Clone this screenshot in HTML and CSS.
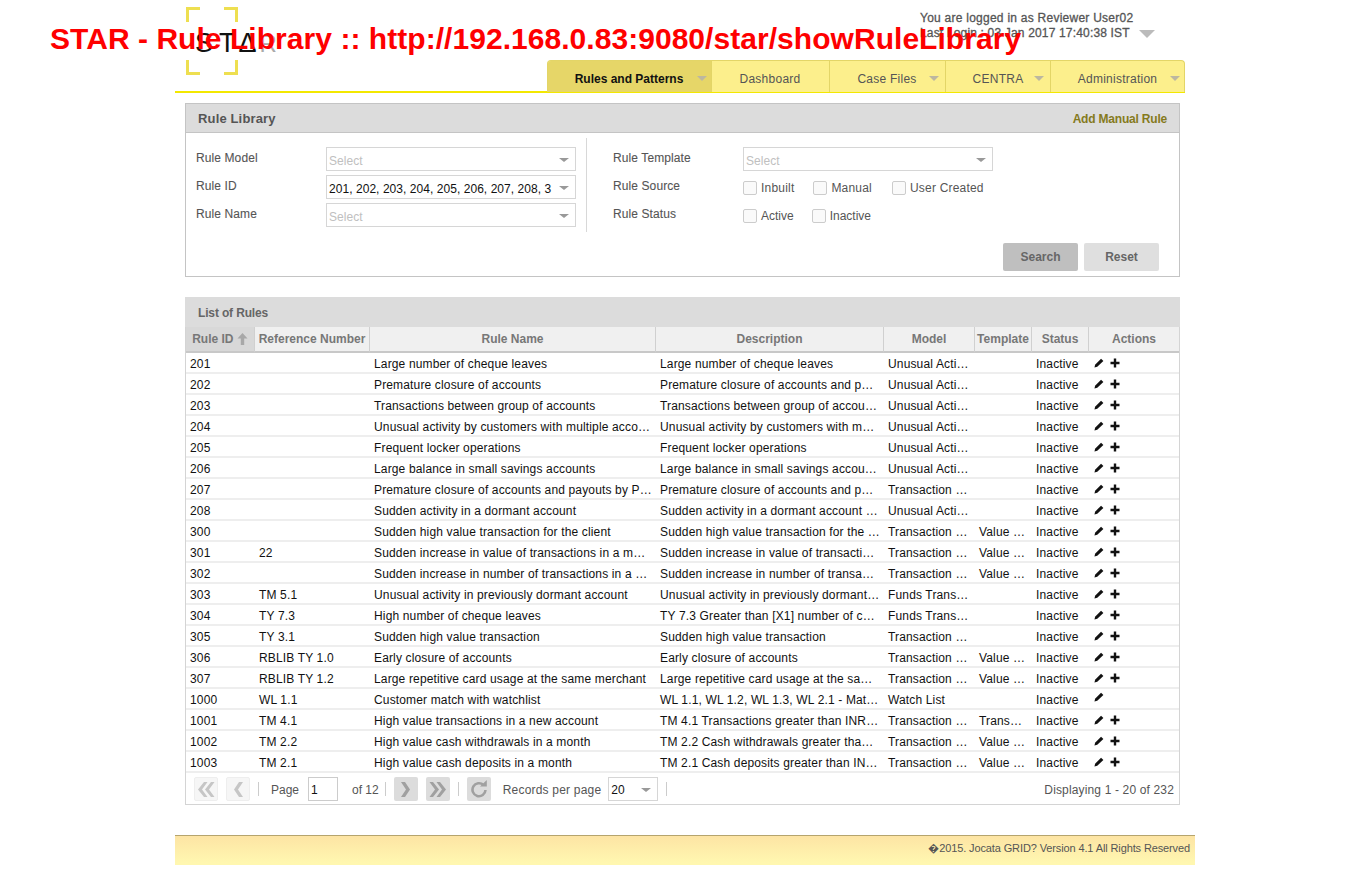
FILE: index.html
```html
<!DOCTYPE html>
<html lang="en">
<head>
<meta charset="utf-8">
<title>STAR - Rule Library</title>
<link rel="stylesheet" href="styles.css">
</head>
<body>
<div class="overlay-title">STAR - Rule Library :: http://192.168.0.83:9080/star/showRuleLibrary</div>
<div class="page">
  <header class="header">
    <div class="logo">
      <svg class="logo-frame" width="52" height="68" viewBox="0 0 52 68"><path d="M14 1.500H1.500V15M38 1.500H50.500V15M14 66.500H1.500V53M38 66.500H50.500V53" fill="none" stroke="#eedf50" stroke-width="3"/></svg>
      <span class="logo-text"><span class="logo-s">S</span>TΔ<span class="logo-r">R</span></span>
    </div>
    <div class="user-info">
      <div>You are logged in as Reviewer User02</div>
      <div class="user-last">Last Login : 03 Jan 2017 17:40:38 IST<span class="user-caret"></span></div>
    </div>
    <nav class="nav">
      <a class="nav-item nav-active nav-w1">Rules and Patterns<i class="caret"></i></a>
      <a class="nav-item nav-w2">Dashboard</a>
      <a class="nav-item nav-w3">Case Files<i class="caret caret-in"></i></a>
      <a class="nav-item nav-w4">CENTRA<i class="caret caret-in"></i></a>
      <a class="nav-item nav-w5">Administration<i class="caret"></i></a>
    </nav>
  </header>

  <section class="panel search-panel">
    <div class="panel-head">
      <h2>Rule Library</h2>
      <a class="add-link">Add Manual Rule</a>
    </div>
    <div class="search-body">
      <div class="form-col form-left">
        <label>Rule Model</label>
        <div class="select placeholder">Select<i class="sel-caret"></i></div>
        <label>Rule ID</label>
        <div class="select">201, 202, 203, 204, 205, 206, 207, 208, 3<i class="sel-caret"></i></div>
        <label>Rule Name</label>
        <div class="select placeholder">Select<i class="sel-caret"></i></div>
      </div>
      <div class="form-col form-right">
        <label>Rule Template</label>
        <div class="select placeholder">Select<i class="sel-caret"></i></div>
        <label>Rule Source</label>
        <div class="checks checks-wide">
          <span class="check c1"><i class="box"></i>Inbuilt</span>
          <span class="check c2"><i class="box"></i>Manual</span>
          <span class="check"><i class="box"></i>User Created</span>
        </div>
        <label>Rule Status</label>
        <div class="checks">
          <span class="check c3"><i class="box"></i>Active</span>
          <span class="check"><i class="box"></i>Inactive</span>
        </div>
      </div>
      <div class="buttons">
        <button class="btn btn-search">Search</button>
        <button class="btn btn-reset">Reset</button>
      </div>
    </div>
  </section>

  <section class="list-panel">
    <h3 class="list-title">List of Rules</h3>
    <table class="grid">
      <colgroup>
        <col class="w-id"><col class="w-ref"><col class="w-name"><col class="w-desc"><col class="w-model"><col class="w-tmpl"><col class="w-status"><col class="w-act">
      </colgroup>
      <thead>
        <tr>
          <th class="sorted">Rule ID <svg width="11" height="12" viewBox="0 0 11 12"><path d="M5.500 0L10.500 5.500H7.200V12H3.800V5.500H.5Z" fill="#a8a8a8"/></svg></th>
          <th>Reference Number</th><th>Rule Name</th><th>Description</th><th>Model</th><th>Template</th><th>Status</th><th>Actions</th>
        </tr>
      </thead>
      <tbody>
        <tr><td>201</td><td></td><td>Large number of cheque leaves</td><td>Large number of cheque leaves</td><td>Unusual Activity</td><td></td><td>Inactive</td><td class="act"><svg class="ic-edit"><use href="#edit"/></svg><svg class="ic-add"><use href="#add"/></svg></td></tr>
        <tr><td>202</td><td></td><td>Premature closure of accounts</td><td>Premature closure of accounts and payouts</td><td>Unusual Activity</td><td></td><td>Inactive</td><td class="act"><svg class="ic-edit"><use href="#edit"/></svg><svg class="ic-add"><use href="#add"/></svg></td></tr>
        <tr><td>203</td><td></td><td>Transactions between group of accounts</td><td>Transactions between group of accounts held</td><td>Unusual Activity</td><td></td><td>Inactive</td><td class="act"><svg class="ic-edit"><use href="#edit"/></svg><svg class="ic-add"><use href="#add"/></svg></td></tr>
        <tr><td>204</td><td></td><td>Unusual activity by customers with multiple accounts</td><td>Unusual activity by customers with multiple accounts</td><td>Unusual Activity</td><td></td><td>Inactive</td><td class="act"><svg class="ic-edit"><use href="#edit"/></svg><svg class="ic-add"><use href="#add"/></svg></td></tr>
        <tr><td>205</td><td></td><td>Frequent locker operations</td><td>Frequent locker operations</td><td>Unusual Activity</td><td></td><td>Inactive</td><td class="act"><svg class="ic-edit"><use href="#edit"/></svg><svg class="ic-add"><use href="#add"/></svg></td></tr>
        <tr><td>206</td><td></td><td>Large balance in small savings accounts</td><td>Large balance in small savings accounts held</td><td>Unusual Activity</td><td></td><td>Inactive</td><td class="act"><svg class="ic-edit"><use href="#edit"/></svg><svg class="ic-add"><use href="#add"/></svg></td></tr>
        <tr><td>207</td><td></td><td>Premature closure of accounts and payouts by Proxy</td><td>Premature closure of accounts and payouts</td><td>Transaction Monitoring</td><td></td><td>Inactive</td><td class="act"><svg class="ic-edit"><use href="#edit"/></svg><svg class="ic-add"><use href="#add"/></svg></td></tr>
        <tr><td>208</td><td></td><td>Sudden activity in a dormant account</td><td>Sudden activity in a dormant account - details</td><td>Unusual Activity</td><td></td><td>Inactive</td><td class="act"><svg class="ic-edit"><use href="#edit"/></svg><svg class="ic-add"><use href="#add"/></svg></td></tr>
        <tr><td>300</td><td></td><td>Sudden high value transaction for the client</td><td>Sudden high value transaction for the client</td><td>Transaction Monitoring</td><td>Value Based</td><td>Inactive</td><td class="act"><svg class="ic-edit"><use href="#edit"/></svg><svg class="ic-add"><use href="#add"/></svg></td></tr>
        <tr><td>301</td><td>22</td><td>Sudden increase in value of transactions in a month</td><td>Sudden increase in value of transactions in a month</td><td>Transaction Monitoring</td><td>Value Based</td><td>Inactive</td><td class="act"><svg class="ic-edit"><use href="#edit"/></svg><svg class="ic-add"><use href="#add"/></svg></td></tr>
        <tr><td>302</td><td></td><td>Sudden increase in number of transactions in a month</td><td>Sudden increase in number of transactions</td><td>Transaction Monitoring</td><td>Value Based</td><td>Inactive</td><td class="act"><svg class="ic-edit"><use href="#edit"/></svg><svg class="ic-add"><use href="#add"/></svg></td></tr>
        <tr><td>303</td><td>TM 5.1</td><td>Unusual activity in previously dormant account</td><td>Unusual activity in previously dormant account</td><td>Funds Transactions</td><td></td><td>Inactive</td><td class="act"><svg class="ic-edit"><use href="#edit"/></svg><svg class="ic-add"><use href="#add"/></svg></td></tr>
        <tr><td>304</td><td>TY 7.3</td><td>High number of cheque leaves</td><td>TY 7.3 Greater than [X1] number of cheque leaves</td><td>Funds Transactions</td><td></td><td>Inactive</td><td class="act"><svg class="ic-edit"><use href="#edit"/></svg><svg class="ic-add"><use href="#add"/></svg></td></tr>
        <tr><td>305</td><td>TY 3.1</td><td>Sudden high value transaction</td><td>Sudden high value transaction</td><td>Transaction Monitoring</td><td></td><td>Inactive</td><td class="act"><svg class="ic-edit"><use href="#edit"/></svg><svg class="ic-add"><use href="#add"/></svg></td></tr>
        <tr><td>306</td><td>RBLIB TY 1.0</td><td>Early closure of accounts</td><td>Early closure of accounts</td><td>Transaction Monitoring</td><td>Value Based</td><td>Inactive</td><td class="act"><svg class="ic-edit"><use href="#edit"/></svg><svg class="ic-add"><use href="#add"/></svg></td></tr>
        <tr><td>307</td><td>RBLIB TY 1.2</td><td>Large repetitive card usage at the same merchant</td><td>Large repetitive card usage at the same merchant</td><td>Transaction Monitoring</td><td>Value Based</td><td>Inactive</td><td class="act"><svg class="ic-edit"><use href="#edit"/></svg><svg class="ic-add"><use href="#add"/></svg></td></tr>
        <tr><td>1000</td><td>WL 1.1</td><td>Customer match with watchlist</td><td>WL 1.1, WL 1.2, WL 1.3, WL 2.1 - Match with list</td><td>Watch List</td><td></td><td>Inactive</td><td class="act"><svg class="ic-edit ic-up"><use href="#edit"/></svg></td></tr>
        <tr><td>1001</td><td>TM 4.1</td><td>High value transactions in a new account</td><td>TM 4.1 Transactions greater than INR 10 lakh</td><td>Transaction Monitoring</td><td>Transaction</td><td>Inactive</td><td class="act"><svg class="ic-edit"><use href="#edit"/></svg><svg class="ic-add"><use href="#add"/></svg></td></tr>
        <tr><td>1002</td><td>TM 2.2</td><td>High value cash withdrawals in a month</td><td>TM 2.2 Cash withdrawals greater than INR 10 lakh</td><td>Transaction Monitoring</td><td>Value Based</td><td>Inactive</td><td class="act"><svg class="ic-edit"><use href="#edit"/></svg><svg class="ic-add"><use href="#add"/></svg></td></tr>
        <tr><td>1003</td><td>TM 2.1</td><td>High value cash deposits in a month</td><td>TM 2.1 Cash deposits greater than INR 10 lakh</td><td>Transaction Monitoring</td><td>Value Based</td><td>Inactive</td><td class="act"><svg class="ic-edit"><use href="#edit"/></svg><svg class="ic-add"><use href="#add"/></svg></td></tr>
      </tbody>
    </table>
    <div class="pager">
      <span class="pbtn disabled"><svg width="18" height="15" viewBox="0 0 18 15"><path d="M7 0h3.500L5 7.500 10.500 15H7L1 7.500zM14 0h3.500L12 7.500l5.500 7.500H14L8 7.500z" fill="#c6c6c6"/></svg></span>
      <span class="pbtn disabled"><svg width="11" height="15" viewBox="0 0 11 15"><path d="M6 0h4L5 7.500l5 7.500H6L1 7.500z" fill="#c6c6c6"/></svg></span>
      <i class="psep"></i>
      <span class="ptext ptext-page">Page</span>
      <span class="pinput">1</span>
      <span class="ptext ptext-of">of 12</span>
      <i class="psep psep-tight"></i>
      <span class="pbtn active"><svg width="11" height="15" viewBox="0 0 11 15"><path d="M1 0h4l5 7.500L5 15H1l5-7.500z" fill="#a0a0a0"/></svg></span>
      <span class="pbtn active"><svg width="18" height="15" viewBox="0 0 18 15"><path d="M.5 0H4l6 7.500L4 15H.5L6 7.500zM7.500 0H11l6 7.500L11 15H7.500L13 7.500z" fill="#a0a0a0"/></svg></span>
      <i class="psep psep-tight"></i>
      <span class="pbtn active pbtn-refresh"><svg width="18" height="18" viewBox="0 0 18 18"><path d="M13.500 5A6.500 6.500 0 1 0 15.500 10" fill="none" stroke="#a0a0a0" stroke-width="2.600"/><path d="M10 6.500H16.800V0z" fill="#a0a0a0"/></svg></span>
      <span class="ptext ptext-rec">Records per page</span>
      <div class="select pselect">20<i class="sel-caret"></i></div>
      <i class="psep"></i>
      <span class="ptext pinfo">Displaying 1 - 20 of 232</span>
    </div>
  </section>

  <footer class="footer">�2015. Jocata GRID? Version 4.1 All Rights Reserved</footer>
</div>
<svg width="0" height="0" class="defs">
  <symbol id="edit" viewBox="0 0 11 11"><path d="M7.800.7L10.300 3.200 3.600 9.700 .5 10.500 1.200 7.300Z" fill="#111"/></symbol>
  <symbol id="add" viewBox="0 0 10 10"><path d="M3.800.5H6.200V3.800H9.500V6.200H6.200V9.500H3.800V6.200H.5V3.800H3.800Z" fill="#111"/></symbol>
</svg>
</body>
</html>
```
FILE: styles.css
```css
* { box-sizing: border-box; }
html, body { margin: 0; padding: 0; background: #fff; }
body { font-family: "Liberation Sans", Arial, sans-serif; font-size: 12px; color: #111; position: relative; min-height: 880px; }
.defs { position: absolute; }

.overlay-title {
  position: absolute; left: 50px; top: 20px; z-index: 10;
  font-size: 30px; line-height: 38px; font-weight: bold; letter-spacing: .045px; color: #fe0000; white-space: nowrap;
}

.page { width: 1020px; margin-left: 175px; }

.header { position: relative; width: 1010px; height: 93px; border-bottom: 2px solid #f3e800; }
.logo { position: absolute; left: 11px; top: 7px; width: 90px; height: 68px; }
.logo-frame { display: block; }
.logo-text { position: absolute; left: 12px; top: 21px; font-size: 27px; line-height: 30px; letter-spacing: 3px; color: #111; white-space: nowrap; }
.logo-s { margin-left: -3px; letter-spacing: 6px; }
.logo-r { color: #aaa; font-size: 24px; letter-spacing: 0; }

.user-info { position: absolute; left: 745px; top: 11px; font-size: 12px; line-height: 15px; letter-spacing: .25px; color: #555; -webkit-text-stroke: .3px #555; }
.user-last { letter-spacing: .17px; }
.user-caret { display: inline-block; margin-left: 9px; border: 8px solid transparent; border-top-color: #bbb; border-bottom-width: 0; vertical-align: -1px; }

.nav { position: absolute; left: 372px; top: 60px; display: flex; height: 32px; border: 1px solid #e3d567; border-bottom: 0; border-radius: 4px 4px 0 0; background: #fcef8c; overflow: hidden; width: 638px; }
.nav-item { position: relative; display: block; height: 31px; line-height: 36px; color: #555; border-right: 1px solid #e3d567; text-align: center; letter-spacing: .25px; }
.nav-item:last-child { border-right: 0; }
.nav-active { background: #e6d668; color: #111; font-weight: bold; letter-spacing: 0; }
.nav-w1 { width: 164px; padding-right: 1px; }
.nav-w2 { width: 118px; padding-right: 1px; }
.nav-w3 { width: 116px; padding-right: 1px; }
.nav-w4 { width: 105px; }
.nav-w5 { width: 133px; }
.caret { position: absolute; right: 4px; top: 15px; border: 5.500px solid transparent; border-top: 5px solid #bcb7a0; border-bottom: 0; }
.caret-in { right: 6px; }

.panel { width: 995px; margin: 10px 0 0 10px; border: 1px solid #c4c4c4; height: 174px; }
.panel-head { display: flex; justify-content: space-between; align-items: center; height: 29px; background: #dcdcdc; padding: 0 12px; border-bottom: 1px solid #c4c4c4; }
.panel-head h2 { margin: 0; font-size: 13px; letter-spacing: .15px; font-weight: bold; color: #555; padding-top: 1px; }
.add-link { font-size: 12px; font-weight: bold; letter-spacing: -.2px; color: #857a1c; padding-top: 1px; }

.search-body { display: grid; grid-template-columns: 391px 1fr; grid-template-rows: 94px auto; padding: 5px 0 0 10px; }
.form-col { display: grid; grid-template-columns: 130px 250px; grid-auto-rows: 28px; padding-top: 9px; height: 94px; align-items: start; }
.form-left { border-right: 1px solid #d8d8d8; }
.form-right { padding-left: 26px; }
.form-col label { color: #555; line-height: 14px; margin-top: 4px; letter-spacing: .1px; -webkit-text-stroke: .1px #555; }
.select { position: relative; height: 24px; width: 250px; border: 1px solid #d6d6d6; line-height: 26px; padding-left: 2px; color: #111; white-space: nowrap; background: #fff; letter-spacing: .05px; }
.placeholder { color: #c0c0c0; }
.sel-caret { position: absolute; right: 6px; top: 10px; border: 4px solid transparent; border-top: 4px solid #999; border-bottom: 0; border-left-width: 5px; border-right-width: 5px; }

.checks { display: flex; align-items: center; height: 24px; color: #555; white-space: nowrap; padding-top: 1px; }
.checks-wide { letter-spacing: .2px; }
.check { display: inline-flex; align-items: center; margin-right: 19px; }
.c1 { margin-right: 19px; }
.c2 { margin-right: 20px; }
.c3 { margin-right: 18px; }
.box { display: block; width: 14px; height: 14px; border: 1px solid #ccc; border-radius: 2px; margin-right: 4px; background: #fafafa; }

.buttons { grid-column: 1 / 3; display: flex; justify-content: flex-end; gap: 6px; padding-right: 20px; margin-top: 11px; }
.btn { width: 75px; height: 28px; border: 0; border-radius: 2px; font-family: inherit; font-size: 12px; font-weight: bold; color: #666; padding: 0; }
.btn-search { background: #bfbfbf; }
.btn-reset { background: #dfdfdf; }

.list-panel { width: 995px; margin: 20px 0 0 10px; }
.list-title { margin: 0; height: 30px; line-height: 32px; padding-left: 13px; background: #dcdcdc; font-size: 12px; font-weight: bold; letter-spacing: -.15px; color: #666; }
.grid { width: 995px; table-layout: fixed; border-collapse: separate; border-spacing: 0; border-left: 1px solid #d4d4d4; border-right: 1px solid #d4d4d4; }
.w-id { width: 69px; } .w-ref { width: 115px; } .w-name { width: 286px; } .w-desc { width: 228px; }
.w-model { width: 91px; } .w-tmpl { width: 57px; } .w-status { width: 57px; } .w-act { width: 90px; }
.grid th { height: 26px; padding: 0 0 1px; background: #f0f0f0; border-right: 1px solid #d0d0d0; border-bottom: 2px solid #c8c8c8; color: #777; font-size: 12px; font-weight: bold; text-align: center; white-space: nowrap; overflow: hidden; }
.grid th:last-child { border-right: 0; }
.grid th.sorted { background: #d8d8d8; }
.grid th svg { vertical-align: -2px; }
.grid td { height: 21px; padding: 3px 4px 0; border-bottom: 2px solid #eee; color: #111; white-space: nowrap; overflow: hidden; text-overflow: ellipsis; line-height: 16px; letter-spacing: .15px; }
.grid td.act { padding-left: 5px; }
.ic-edit { display: inline-block; width: 10px; height: 10px; margin-right: 6px; vertical-align: 0; }
.ic-up { vertical-align: 2px; }
.ic-add { display: inline-block; width: 10px; height: 10px; vertical-align: 0; }

.pager { display: flex; align-items: center; height: 32px; padding: 1px 5px 0 8px; border: 1px solid #d4d4d4; border-top: 0; width: 995px; color: #555; }
.pbtn { display: flex; align-items: center; justify-content: center; width: 24px; height: 24px; border-radius: 2px; margin-right: 8px; }
.pbtn-refresh { margin-right: 12px; }
.disabled { background: #f6f6f6; border: 1px solid #eee; }
.active { background: #dcdcdc; }
.psep { display: block; width: 1px; height: 14px; background: #ccc; margin-right: 12px; }
.psep-tight { margin-right: 8px; }
.ptext { white-space: nowrap; padding-top: 1px; }
.ptext-page { margin-right: 9px; }
.ptext-of { margin: 0 6px 0 14px; }
.ptext-rec { margin-right: 7px; letter-spacing: .2px; }
.pinput { display: block; width: 30px; height: 24px; border: 1px solid #ccc; line-height: 25px; padding-left: 2px; color: #111; }
.select.pselect { width: 50px; margin-right: 8px; line-height: 24px; }
.pinfo { margin-left: auto; letter-spacing: .15px; }

.footer { width: 1020px; height: 30px; margin-top: 30px; border-top: 1px solid #b5a46e; background: linear-gradient(#fde4a4, #fff7b0 92%); text-align: right; font-size: 11px; line-height: 24px; padding-right: 5px; color: #555; letter-spacing: -.12px; }
```
